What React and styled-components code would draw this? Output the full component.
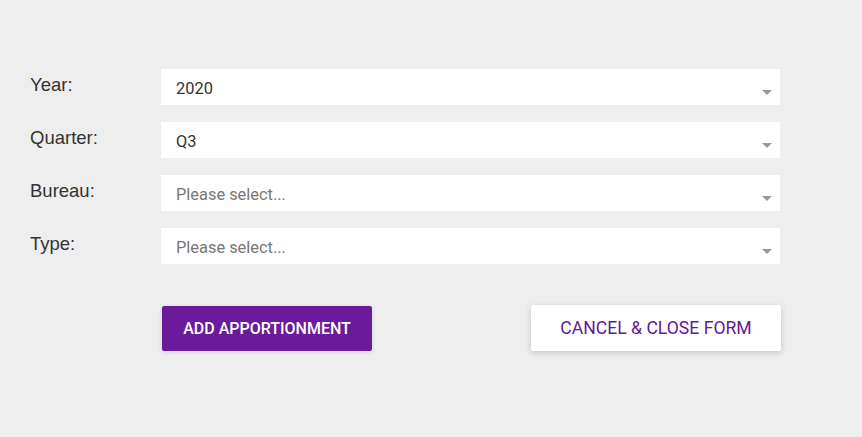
import React from 'react';
import styled, { createGlobalStyle } from 'styled-components';

const GlobalStyle = createGlobalStyle`
  html, body {
    margin: 0;
    padding: 0;
    background: #eeeeee;
  }
`;

const Page = styled.div`
  width: 862px;
  height: 437px;
  background: #eeeeee;
  padding: 69px 0 0 30px;
  box-sizing: border-box;
`;

const Form = styled.div`
  display: flex;
  flex-direction: column;
  gap: 17px;
`;

const Row = styled.div`
  display: flex;
  align-items: flex-start;
`;

const Label = styled.div`
  width: 131px;
  padding-top: 5px;
  font-family: 'Liberation Sans', Arial, sans-serif;
  font-size: 18.5px;
  color: #333;
`;

const Select = styled.div`
  position: relative;
  width: 619px;
  height: 36px;
  background: #fff;
  display: flex;
  align-items: center;
  padding: 2px 0 0 15px;
  box-sizing: border-box;
  font-family: Roboto, sans-serif;
  font-size: 16.4px;
  color: ${(p) => (p.placeholder ? '#777' : '#333')};
`;

const Caret = styled.span`
  position: absolute;
  right: 8px;
  top: 21px;
  width: 0;
  height: 0;
  border-left: 5px solid transparent;
  border-right: 5px solid transparent;
  border-top: 5px solid #999;
`;

const Actions = styled.div`
  display: flex;
  justify-content: space-between;
  align-items: center;
  width: 619px;
  margin: 41px 0 0 132px;
`;

const Button = styled.button`
  border: none;
  border-radius: 2px;
  font-family: Roboto, sans-serif;
  text-transform: uppercase;
  cursor: pointer;
  padding: 0;
  background: ${(p) => (p.primary ? '#6a1b9a' : '#fff')};
  color: ${(p) => (p.primary ? '#fff' : '#631a93')};
  font-weight: ${(p) => (p.primary ? 500 : 400)};
  font-size: ${(p) => (p.primary ? '16px' : '17.6px')};
  width: ${(p) => (p.primary ? '210px' : '250px')};
  height: ${(p) => (p.primary ? '45px' : '46px')};
  box-shadow: ${(p) =>
    p.primary ? '0 1px 4px rgba(0,0,0,0.12)' : '0 2px 6px rgba(0,0,0,0.18)'};
`;

const fields = [
  { label: 'Year:', value: '2020' },
  { label: 'Quarter:', value: 'Q3' },
  { label: 'Bureau:', value: null },
  { label: 'Type:', value: null },
];

export default function App() {
  return (
    <Page>
      <GlobalStyle />
      <Form>
        {fields.map((f) => (
          <Row key={f.label}>
            <Label>{f.label}</Label>
            <Select placeholder={!f.value}>
              {f.value || 'Please select...'}
              <Caret />
            </Select>
          </Row>
        ))}
      </Form>
      <Actions>
        <Button primary>Add Apportionment</Button>
        <Button>Cancel &amp; Close Form</Button>
      </Actions>
    </Page>
  );
}
